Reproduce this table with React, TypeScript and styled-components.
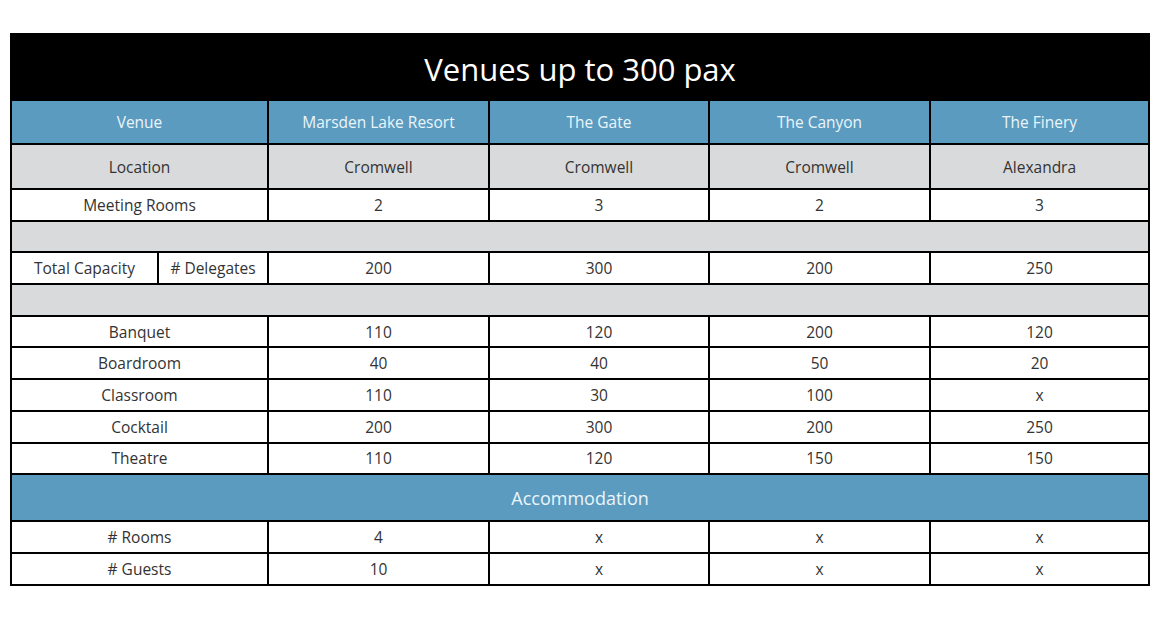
import React from 'react';
import { styled, createGlobalStyle } from 'styled-components';

const GlobalStyle = createGlobalStyle`
  body {
    margin: 0;
    background: #ffffff;
    font-family: 'Open Sans', 'Liberation Sans', sans-serif;
  }
`;

const Page = styled.div`
  padding: 33px 10px;
`;

const Table = styled.table`
  width: 1138px;
  table-layout: fixed;
  border-collapse: collapse;
  border: 2px solid #000;
  color: #333;
  font-size: 15.5px;
`;

const TitleCell = styled.th`
  background: #000;
  color: #fff;
  font-size: 31px;
  font-weight: 400;
  height: 61px;
  padding: 3px 0 0;
  border: 2px solid #000;
`;

const HeadCell = styled.th`
  background: #5b9bc0;
  color: #eaf5fb;
  font-weight: 400;
  height: 42px;
  padding: 0;
  border: 2px solid #000;
`;

const Cell = styled.td<{ $grey?: boolean; $tall?: boolean }>`
  background: ${p => (p.$grey ? '#d9dadc' : '#fff')};
  height: ${p => (p.$tall ? '43px' : '29.7px')};
  padding: 0;
  text-align: center;
  border: 2px solid #000;
`;

const SectionCell = styled.td`
  background: #5b9bc0;
  color: #eaf5fb;
  font-size: 18px;
  height: 45px;
  padding: 0;
  text-align: center;
  border: 2px solid #000;
`;

const venues = ['Marsden Lake Resort', 'The Gate', 'The Canyon', 'The Finery'];
const locations = ['Cromwell', 'Cromwell', 'Cromwell', 'Alexandra'];

const layouts: [string, string[]][] = [
  ['Banquet', ['110', '120', '200', '120']],
  ['Boardroom', ['40', '40', '50', '20']],
  ['Classroom', ['110', '30', '100', 'x']],
  ['Cocktail', ['200', '300', '200', '250']],
  ['Theatre', ['110', '120', '150', '150']],
];

const accommodation: [string, string[]][] = [
  ['# Rooms', ['4', 'x', 'x', 'x']],
  ['# Guests', ['10', 'x', 'x', 'x']],
];

const App = () => {
  return (
    <>
      <GlobalStyle />
      <Page>
        <Table>
          <colgroup>
            <col style={{ width: 147 }} />
            <col style={{ width: 110 }} />
            <col style={{ width: 221 }} />
            <col style={{ width: 220 }} />
            <col style={{ width: 221 }} />
            <col style={{ width: 219 }} />
          </colgroup>
          <thead>
            <tr>
              <TitleCell colSpan={6}>Venues up to 300 pax</TitleCell>
            </tr>
            <tr>
              <HeadCell colSpan={2}>Venue</HeadCell>
              {venues.map(v => (
                <HeadCell key={v}>{v}</HeadCell>
              ))}
            </tr>
          </thead>
          <tbody>
            <tr>
              <Cell $grey $tall colSpan={2}>Location</Cell>
              {locations.map((l, i) => (
                <Cell $grey $tall key={i}>{l}</Cell>
              ))}
            </tr>
            <tr>
              <Cell colSpan={2}>Meeting Rooms</Cell>
              {['2', '3', '2', '3'].map((n, i) => (
                <Cell key={i}>{n}</Cell>
              ))}
            </tr>
            <tr>
              <Cell $grey colSpan={6} />
            </tr>
            <tr>
              <Cell>Total Capacity</Cell>
              <Cell># Delegates</Cell>
              {['200', '300', '200', '250'].map((n, i) => (
                <Cell key={i}>{n}</Cell>
              ))}
            </tr>
            <tr>
              <Cell $grey colSpan={6} />
            </tr>
            {layouts.map(([name, vals]) => (
              <tr key={name}>
                <Cell colSpan={2}>{name}</Cell>
                {vals.map((v, i) => (
                  <Cell key={i}>{v}</Cell>
                ))}
              </tr>
            ))}
            <tr>
              <SectionCell colSpan={6}>Accommodation</SectionCell>
            </tr>
            {accommodation.map(([name, vals]) => (
              <tr key={name}>
                <Cell colSpan={2}>{name}</Cell>
                {vals.map((v, i) => (
                  <Cell key={i}>{v}</Cell>
                ))}
              </tr>
            ))}
          </tbody>
        </Table>
      </Page>
    </>
  );
};

export default App;
